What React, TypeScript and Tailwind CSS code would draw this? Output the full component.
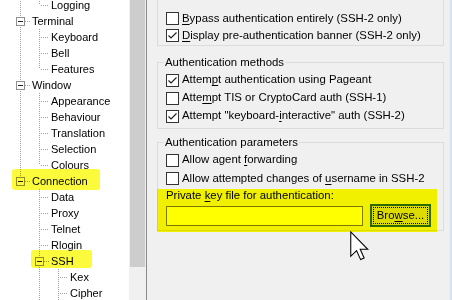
import React from "react";

type Row = { label: string; depth: number; prefix: boolean[]; last: boolean; exp?: boolean };

const rows: Row[] = [
  { label: "Logging", depth: 1, prefix: [true], last: true },
  { label: "Terminal", depth: 0, prefix: [], last: false, exp: true },
  { label: "Keyboard", depth: 1, prefix: [true], last: false },
  { label: "Bell", depth: 1, prefix: [true], last: false },
  { label: "Features", depth: 1, prefix: [true], last: true },
  { label: "Window", depth: 0, prefix: [], last: false, exp: true },
  { label: "Appearance", depth: 1, prefix: [true], last: false },
  { label: "Behaviour", depth: 1, prefix: [true], last: false },
  { label: "Translation", depth: 1, prefix: [true], last: false },
  { label: "Selection", depth: 1, prefix: [true], last: false },
  { label: "Colours", depth: 1, prefix: [true], last: true },
  { label: "Connection", depth: 0, prefix: [], last: true, exp: true },
  { label: "Data", depth: 1, prefix: [false], last: false },
  { label: "Proxy", depth: 1, prefix: [false], last: false },
  { label: "Telnet", depth: 1, prefix: [false], last: false },
  { label: "Rlogin", depth: 1, prefix: [false], last: false },
  { label: "SSH", depth: 1, prefix: [false], last: false, exp: true },
  { label: "Kex", depth: 2, prefix: [false, true], last: false },
  { label: "Cipher", depth: 2, prefix: [false, true], last: false },
];

const LINE = "#a0a0a0";

function PrefixCol({ on }: { on: boolean }) {
  return (
    <svg width="19" height="16" className="shrink-0" shapeRendering="crispEdges">
      {on && <line x1="9.5" y1="0" x2="9.5" y2="16" stroke={LINE} strokeDasharray="1 1" />}
    </svg>
  );
}

function OwnCol({ last, exp }: { last: boolean; exp?: boolean }) {
  return (
    <svg width="19" height="16" className="shrink-0" shapeRendering="crispEdges">
      <line x1="9.5" y1="0" x2="9.5" y2={last ? 8 : 16} stroke={LINE} strokeDasharray="1 1" />
      <line x1={exp ? 14 : 11} y1="8.5" x2="19" y2="8.5" stroke={LINE} strokeDasharray="1 1" />
      {exp && (
        <>
          <rect x="5.5" y="4.5" width="8" height="8" fill="white" stroke="#8f8f8f" />
          <line x1="7" y1="8.5" x2="12" y2="8.5" stroke="#222" />
        </>
      )}
    </svg>
  );
}

function Check({ checked }: { checked?: boolean }) {
  return (
    <div className="w-[13px] h-[13px] shrink-0 border border-[#333333] bg-white flex items-center justify-center">
      {checked && (
        <svg width="11" height="11" viewBox="0 0 11 11">
          <polyline points="1.5,5.5 4,8 9.5,2.5" fill="none" stroke="#222" strokeWidth="1.2" />
        </svg>
      )}
    </div>
  );
}

function CB({ checked, h, children }: { checked?: boolean; h: string; children: React.ReactNode }) {
  return (
    <div className={`flex items-center ${h}`}>
      <Check checked={checked} />
      <span className="ml-[3px] whitespace-nowrap">{children}</span>
    </div>
  );
}

function U({ children }: { children: React.ReactNode }) {
  return <span className="underline underline-offset-[2px] decoration-[1px]">{children}</span>;
}

export default function App() {
  return (
    <div className="relative w-[452px] h-[300px] overflow-hidden flex bg-[#f0f0f0] text-[11px] text-black font-['Liberation_Sans',Arial,sans-serif]">
      {/* tree pane */}
      <div className="w-[129px] h-full bg-white overflow-hidden pl-[11px]">
        <div className="-mt-[3px] flex flex-col">
          {rows.map((r) => (
            <div key={r.label} className="flex items-center h-[16px]">
              {r.prefix.map((p, i) => (
                <PrefixCol key={i} on={p} />
              ))}
              <OwnCol last={r.last} exp={r.exp} />
              <span className="ml-[2px] leading-[16px] whitespace-nowrap">{r.label}</span>
            </div>
          ))}
        </div>
      </div>
      {/* scrollbar */}
      <div className="w-[17px] h-full bg-[#f0f0f0] px-[1px]">
        <div className="w-full h-[267px] bg-[#cdcdcd]" />
      </div>
      <div className="w-[1px] h-full bg-[#8a8a8a]" />
      {/* right panel */}
      <div className="flex-1 h-full pl-[10px] flex flex-col text-[11.4px]">
        {/* group 1 */}
        <div className="w-[287px] border-x border-b border-[#dcdcdc] pl-[8px] pt-[10px] pb-[1px]">
          <CB h="h-[17px]">
            <U>B</U>ypass authentication entirely (SSH-2 only)
          </CB>
          <CB h="h-[17px]" checked>
            <U>D</U>isplay pre-authentication banner (SSH-2 only)
          </CB>
        </div>
        {/* group 2 */}
        <fieldset className="w-[287px] mt-[9px] border border-[#dcdcdc] pl-[8px] pb-[3px]">
          <legend className="-ml-[2px] px-[1px] leading-[14px]">Authentication methods</legend>
          <div className="pt-[2px]">
            <CB h="h-[18px]" checked>
              Attem<U>p</U>t authentication using Pageant
            </CB>
            <CB h="h-[18px]">
              Atte<U>m</U>pt TIS or CryptoCard auth (SSH-1)
            </CB>
            <CB h="h-[18px]" checked>
              Attempt "keyboard-<U>i</U>nteractive" auth (SSH-2)
            </CB>
          </div>
        </fieldset>
        {/* group 3 */}
        <fieldset className="w-[287px] mt-[6px] border border-[#dcdcdc] pl-[8px] pb-[3px]">
          <legend className="-ml-[2px] px-[1px] leading-[14px]">Authentication parameters</legend>
          <div className="pt-[2px]">
            <CB h="h-[18px]">
              Allow agent <U>f</U>orwarding
            </CB>
            <CB h="h-[19px]">
              Allow attempted changes of <U>u</U>sername in SSH-2
            </CB>
            <div className="h-[16px] flex items-center">
              <span className="whitespace-nowrap">
                Private <U>k</U>ey file for authentication:
              </span>
            </div>
            <div className="h-[23px] flex items-center">
              <div className="w-[197px] h-[20px] border border-[#7a7a7a] bg-white" />
              <div className="ml-[7px] w-[61px] h-[23px] border-2 border-[#2f6a9e] bg-[#dcdcdc] p-[1px]">
                <div className="w-full h-full border border-dotted border-black flex items-center justify-center">
                  <span className="whitespace-nowrap">
                    Bro<U>w</U>se...
                  </span>
                </div>
              </div>
            </div>
          </div>
        </fieldset>
      </div>
      <div className="w-[2px] h-full bg-[#d5e3f1]" />

      {/* highlights */}
      <div className="absolute left-[12px] top-[169px] w-[88px] h-[21px] rounded-[3px] bg-[#fbfb3c] mix-blend-multiply" />
      <div className="absolute left-[31px] top-[250px] w-[61px] h-[18px] rounded-[3px] bg-[#fbfb3c] mix-blend-multiply" />
      <div className="absolute left-[157px] top-[189px] w-[280px] h-[43px] bg-[#ffff00] mix-blend-multiply" />

      {/* cursor */}
      <svg className="absolute left-[350px] top-[231px]" width="19" height="30" viewBox="0 0 12.5 19.5">
        <path
          d="M0.5 0.5 L0.5 16.5 L4.3 12.8 L7 18.7 L9.3 17.7 L6.7 11.9 L11.7 11.9 Z"
          fill="white"
          stroke="black"
          strokeWidth="0.7"
          strokeLinejoin="miter"
        />
      </svg>
    </div>
  );
}
